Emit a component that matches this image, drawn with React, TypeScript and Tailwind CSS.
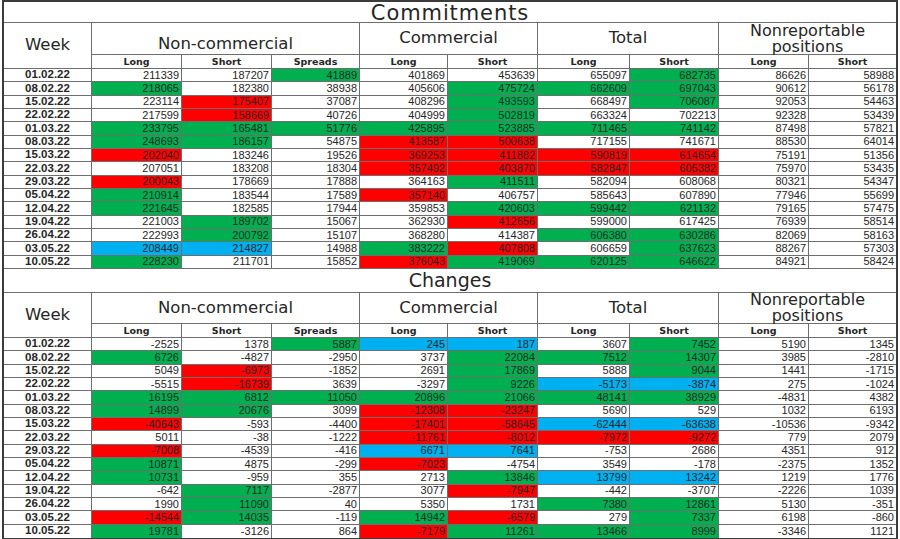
import clsx from "clsx"

const COLS = "grid-cols-[88px_90px_90px_88px_88px_90px_92px_89px_90px_87px]"

const fill: Record<string, string> = {
  g: "bg-[#00b050]",
  r: "bg-[#ff0000]",
  b: "bg-[#00b0f0]",
  "": "bg-white",
}

const commitments = [
  "01.02.22 211339 187207 41889g 401869 453639 655097 682735g 86626 58988",
  "08.02.22 218065g 182380 38938 405606 475724g 662609g 697043g 90612 56178",
  "15.02.22 223114 175407r 37087 408296 493593g 668497 706087g 92053 54463",
  "22.02.22 217599 158669r 40726 404999 502819g 663324 702213 92328 53439",
  "01.03.22 233795g 165481g 51776g 425895g 523885g 711465g 741142g 87498 57821",
  "08.03.22 248693g 186157g 54875 413587r 500638r 717155 741671 88530 64014",
  "15.03.22 202040r 183246 19526 369253r 411882r 590819r 614654r 75191 51356",
  "22.03.22 207051 183208 18304 357492r 403870r 582847r 605382r 75970 53435",
  "29.03.22 200043r 178669 17888 364163 411511g 582094 608068 80321 54347",
  "05.04.22 210914g 183544 17589 357140r 406757 585643 607890 77946 55699",
  "12.04.22 221645g 182585 17944 359853 420603g 599442g 621132g 79165 57475",
  "19.04.22 221003 189702g 15067 362930 412656r 599000 617425 76939 58514",
  "26.04.22 222993 200792g 15107 368280 414387 606380g 630286g 82069 58163",
  "03.05.22 208449b 214827b 14988 383222g 407808r 606659 637623g 88267 57303",
  "10.05.22 228230g 211701 15852 376043r 419069g 620125g 646622g 84921 58424",
]

const changes = [
  "01.02.22 -2525 1378 5887g 245b 187b 3607 7452g 5190 1345",
  "08.02.22 6726g -4827 -2950 3737 22084g 7512g 14307g 3985 -2810",
  "15.02.22 5049 -6973r -1852 2691 17869g 5888 9044g 1441 -1715",
  "22.02.22 -5515 -16739r 3639 -3297 9226g -5173b -3874b 275 -1024",
  "01.03.22 16195g 6812g 11050g 20896g 21066g 48141g 38929g -4831 4382",
  "08.03.22 14899g 20676g 3099 -12308r -23247r 5690 529 1032 6193",
  "15.03.22 -40643r -593 -4400 -17401r -58645r -62444b -63638b -10536 -9342",
  "22.03.22 5011 -38 -1222 -11761r -8012r -7972r -9272r 779 2079",
  "29.03.22 -7008r -4539 -416 6671b 7641b -753 2686 4351 912",
  "05.04.22 10871g 4875 -299 -7023r -4754 3549 -178 -2375 1352",
  "12.04.22 10731g -959 355 2713 13846g 13799b 13242b 1219 1776",
  "19.04.22 -642 7117g -2877 3077 -7947r -442 -3707 -2226 1039",
  "26.04.22 1990 11090g 40 5350 1731 7380g 12861g 5130 -351",
  "03.05.22 -14544r 14035g -119 14942g -6579r 279 7337g 6198 -860",
  "10.05.22 19781g -3126 864 -7179r 11261g 13466g 8999g -3346 1121",
]

const subHeads = ["Long", "Short", "Spreads", "Long", "Short", "Long", "Short", "Long", "Short"]

const line = "border-[#6e6e6e]"

function Section({
  title,
  rows,
  first,
}: {
  title: string
  rows: string[]
  first: boolean
}) {
  return (
    <div
      className={clsx(
        "grid",
        COLS,
        first
          ? "grid-rows-[21px_32px_14px_repeat(15,13.333px)]"
          : "grid-rows-[24px_31px_14px_repeat(15,13.333px)]",
      )}
    >
      <div
        className={clsx(
          "col-span-10 flex items-center justify-center border-b leading-none text-[#262626]",
          line,
          first ? "text-[21px] tracking-[0.9px] pt-[3px]" : "text-[19px]",
        )}
      >
        {title}
      </div>

      <div className={clsx("row-span-2 flex items-center justify-center border-r border-b text-[16.5px]", line)}>
        Week
      </div>
      <div
        className={clsx(
          "col-span-3 flex justify-center border-r border-b text-[16.5px] leading-[18px]",
          line,
          first ? "items-end pb-[1px]" : "items-center",
        )}
      >
        Non-commercial
      </div>
      <div className={clsx("col-span-2 flex items-center justify-center border-r border-b text-[16.5px]", line)}>
        Commercial
      </div>
      <div className={clsx("col-span-2 flex items-center justify-center border-r border-b text-[16.5px]", line)}>
        Total
      </div>
      <div
        className={clsx(
          "col-span-2 flex flex-col items-center justify-center border-b text-center text-[16px] leading-[15px]",
          line,
        )}
      >
        <span className="leading-[15px]">Nonreportable</span>
        <span className="leading-[15px] pt-[1px]">positions</span>
      </div>

      {subHeads.map((h, i) => (
        <div
          key={i}
          className={clsx(
            "flex items-center justify-center border-b text-[9.5px] font-bold leading-none",
            line,
            i < 8 && "border-r",
          )}
        >
          {h}
        </div>
      ))}

      {rows.map((row, r) => {
        const [date, ...vals] = row.split(" ")
        const last = r === rows.length - 1 && !first
        return [
          <div
            key={`${r}d`}
            className={clsx(
              "flex items-center justify-center border-r font-['Liberation_Sans',sans-serif] text-[11.5px] font-bold leading-none",
              line,
              !last && "border-b",
            )}
          >
            {date}
          </div>,
          ...vals.map((v, c) => {
            const m = v.match(/^(-?\d+)([grb]?)$/)
            const num = m ? m[1] : v
            const tone = m ? m[2] : ""
            return (
              <div
                key={`${r}-${c}`}
                className={clsx(
                  "flex items-center justify-end pr-[2px] font-['Liberation_Sans',sans-serif] text-[11px] leading-none",
                  line,
                  fill[tone],
                  c < 8 && "border-r",
                  !last && "border-b",
                )}
              >
                {num}
              </div>
            )
          }),
        ]
      })}
    </div>
  )
}

export default function App() {
  return (
    <div className="h-[539px] w-[900px] overflow-hidden bg-white font-['DejaVu_Sans',sans-serif] text-[#262626]">
      <div className="ml-[2px] w-[896px] border-x-2 border-t-2 border-b border-[#3c3c3c]">
        <Section title="Commitments" rows={commitments} first />
        <Section title="Changes" rows={changes} first={false} />
      </div>
    </div>
  )
}
